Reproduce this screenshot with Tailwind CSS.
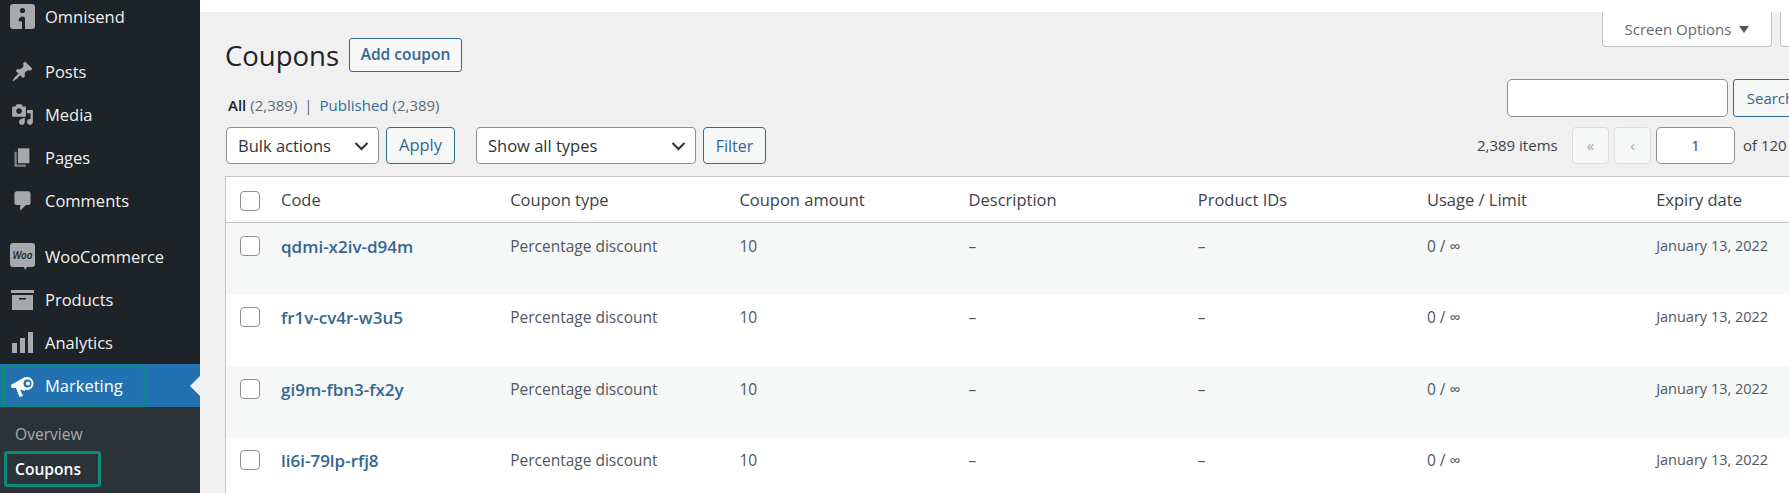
<!DOCTYPE html>
<html lang="en">
<head>
    <meta charset="UTF-8">
    <title>Coupons</title>
    <script src="https://cdn.jsdelivr.net/npm/@tailwindcss/browser@4"></script>
</head>
<body class="bg-[#f0f0f1] font-['Open_Sans',sans-serif] text-[#3c434a] overflow-hidden">
<div class="flex w-[1789px] h-[493px] overflow-hidden">

    <!-- Sidebar -->
    <aside class="w-[200px] shrink-0 bg-[#1d2327] text-[#f0f0f1] text-[16.500px] flex flex-col">
        <div class="flex items-center h-[43px] -mt-[5px] mb-[12px]">
            <svg class="ml-[10px] w-[25px] h-[25px]" viewBox="0 0 25 25"><rect width="25" height="25" rx="3" fill="#a7aaad"/><circle cx="12.500" cy="6.500" r="2.600" fill="#1d2327"/><path d="M8.500 17c0-3 2-4.500 4-4.500 1.800 0 2.500 1 2.500 2.500v10h-3v-7.500c-1 0-2.500 0-3.500-.5z" fill="#1d2327"/></svg>
            <span class="ml-[10px] mt-[2px]">Omnisend</span>
        </div>
        <div class="flex items-center h-[43px]">
            <svg class="ml-[11px] w-[23px] h-[23px]" viewBox="0 0 20 20" fill="#a7aaad"><path d="M10.440 3.020l1.820-1.820 6.360 6.350-1.830 1.820c-1.050-.68-2.480-.57-3.410.36l-.75.75c-.92.93-1.040 2.350-.35 3.410l-1.830 1.820-2.410-2.410-2.800 2.790c-.42.42-3.380 2.710-3.800 2.290s1.860-3.390 2.280-3.810l2.790-2.790L4.100 9.360l1.830-1.820c1.050.69 2.480.57 3.400-.36l.75-.75c.93-.92 1.050-2.350.36-3.410z"/></svg>
            <span class="ml-[11px] mt-[2px]">Posts</span>
        </div>
        <div class="flex items-center h-[43px]">
            <svg class="ml-[11px] w-[23px] h-[23px]" viewBox="0 0 20 20" fill="#a7aaad"><path d="M13 11V4c0-.55-.45-1-1-1h-1.670L9 1H5L3.670 3H2c-.55 0-1 .45-1 1v7c0 .55.45 1 1 1h10c.55 0 1-.45 1-1zM7 4.500c1.380 0 2.500 1.120 2.500 2.500S8.380 9.500 7 9.500 4.500 8.380 4.500 7 5.620 4.500 7 4.500zM14 6h5v10.500c0 1.380-1.120 2.500-2.500 2.500S14 17.880 14 16.500s1.120-2.500 2.500-2.500c.17 0 .34.02.5.05V9h-3V6zm-4 8.050V13h2v3.500c0 1.380-1.120 2.500-2.500 2.500S7 17.880 7 16.500 8.120 14 9.500 14c.17 0 .34.02.5.05z"/></svg>
            <span class="ml-[11px] mt-[2px]">Media</span>
        </div>
        <div class="flex items-center h-[43px]">
            <svg class="ml-[11px] w-[23px] h-[23px]" viewBox="0 0 20 20"><path fill="#a7aaad" d="M6 15V2h10v13H6z"/><path fill="#7d8287" d="M5 16h8v2H3V5h2v11z"/></svg>
            <span class="ml-[11px] mt-[2px]">Pages</span>
        </div>
        <div class="flex items-center h-[43px] mb-[13px]">
            <svg class="ml-[11px] w-[23px] h-[23px]" viewBox="0 0 20 20" fill="#a7aaad"><path d="M5 2h10c1.100 0 2 .9 2 2v8c0 1.100-.9 2-2 2h-2l-5 5v-5H5c-1.100 0-2-.9-2-2V4c0-1.100.9-2 2-2z"/></svg>
            <span class="ml-[11px] mt-[2px]">Comments</span>
        </div>
        <div class="flex items-center h-[43px]">
            <svg class="ml-[10px] w-[25px] h-[27px]" viewBox="0 0 25 27"><path d="M3 0h19c2 0 3 1 3 3v18c0 2-1 3-3 3h-5l-2 3-1-3H3c-2 0-3-1-3-3V3c0-2 1-3 3-3z" fill="#a7aaad"/><text x="12.500" y="15.500" text-anchor="middle" font-size="10" font-weight="600" font-style="italic" fill="#1d2327">Woo</text></svg>
            <span class="ml-[10px] mt-[2px]">WooCommerce</span>
        </div>
        <div class="flex items-center h-[43px]">
            <svg class="ml-[11px] w-[23px] h-[20px]" viewBox="0 0 23 20" fill="#a7aaad"><path d="M0 0h23v3H0z"/><path fill-rule="evenodd" d="M1 5h21v15H1zM8 8v1.500h7V8z"/></svg>
            <span class="ml-[11px] mt-[2px]">Products</span>
        </div>
        <div class="flex items-center h-[43px]">
            <svg class="ml-[12px] w-[21px] h-[21px]" viewBox="0 0 21 21" fill="#a7aaad"><rect y="11" width="5" height="10"/><rect x="8" y="6" width="5" height="15"/><rect x="16" width="5" height="21"/></svg>
            <span class="ml-[12px] mt-[2px]">Analytics</span>
        </div>
        <div class="relative flex items-center h-[43px] bg-[#2271b1] text-white">
            <svg class="ml-[11px] w-[23px] h-[23px]" viewBox="0 0 23 23" fill="#fff"><path d="M0 12c0-1 .5-1.500 1.500-2L14 3v14l-5-1.500 3 6.500-3.500 1-3.500-9H2c-1 0-2-.5-2-2z"/><circle cx="16" cy="9.500" r="6.500"/><circle cx="16.500" cy="9.500" r="4" fill="#2271b1"/><circle cx="17" cy="9.500" r="2"/></svg>
            <span class="ml-[11px] mt-[2px]">Marketing</span>
            <div class="absolute right-0 top-[12px] w-0 h-0 border-y-[10px] border-y-transparent border-r-[10px] border-r-[#f0f0f1]"></div>
            <div class="absolute left-[2px] top-[1px] w-[144px] h-[44px] border-[3px] border-[#0e8a7a] rounded-[3px]"></div>
        </div>
        <div class="flex-1 bg-[#2c3338] text-[15.600px] pt-[16px] pl-[15px] relative">
            <div class="text-[#a7aaad] h-[22px] leading-[22px]">Overview</div>
            <div class="text-white font-semibold h-[22px] leading-[22px] mt-[13px]">Coupons</div>
            <div class="absolute left-[4px] top-[44px] w-[97px] h-[36px] border-[3px] border-[#0e8a7a] rounded-[3px]"></div>
        </div>
    </aside>

    <!-- Main -->
    <main class="flex-1 min-w-0 overflow-hidden">
        <div class="h-[12px] bg-white"></div>
        <div class="w-[1700px] ml-[25px] text-[16.500px]">

            <!-- heading row -->
            <div class="relative flex items-center h-[34px] mt-[26px]">
                <h1 class="text-[27.500px] text-[#1d2327] w-[124px] shrink-0 pt-[2px] leading-none">Coupons</h1>
                <button class="w-[113px] h-[34px] shrink-0 border border-[#2f6d98] rounded-[3px] bg-[#f6f7f7] text-[#34678f] font-semibold text-[15.500px]">Add coupon</button>
                <div class="absolute left-[1377px] -top-[26px] w-[170px] h-[35px] bg-white border border-t-0 border-[#c3c4c7] rounded-b-[4px] flex items-center justify-center gap-[8px] text-[15px] text-[#646970]">Screen Options <span class="w-0 h-0 border-x-[5px] border-x-transparent border-t-[7px] border-t-[#50575e]"></span></div>
                <div class="absolute left-[1555px] -top-[26px] w-[100px] h-[35px] bg-white border border-t-0 border-[#c3c4c7] rounded-b-[4px]"></div>
            </div>

            <!-- All / Published + search -->
            <div class="relative flex items-center h-[22px] mt-[22px] pl-[3px] text-[15px]">
                <span class="text-[#1d2327] font-semibold">All</span>
                <span class="ml-[4px] text-[#646970]">(2,389)</span>
                <span class="mx-[7px] text-[#646970]">|</span>
                <span class="text-[#2f6d98]">Published</span>
                <span class="ml-[4px] text-[#646970]">(2,389)</span>
                <div class="absolute left-[1282px] -top-[15px] w-[221px] h-[38px] bg-white border border-[#8c8f94] rounded-[5px]"></div>
                <button class="absolute left-[1508px] -top-[15px] w-[75px] h-[38px] bg-[#f6f7f7] border border-[#2f6d98] rounded-[3px] text-[#34678f] text-[15px]">Search</button>
            </div>

            <!-- filters + pagination -->
            <div class="flex items-center h-[37px] mt-[11px]">
                <div class="w-[153px] h-[37px] shrink-0 ml-[1px] bg-white border border-[#8c8f94] rounded-[4px] flex items-center justify-between pt-[1px] pl-[11px] pr-[9px] text-[#2c3338]">Bulk actions
                    <svg class="w-[15px] h-[9px]" viewBox="0 0 14 9" fill="none" stroke="#2c3338" stroke-width="2"><path d="M1 1l6 6 6-6"/></svg>
                </div>
                <button class="ml-[7px] w-[69px] h-[37px] shrink-0 bg-[#f6f7f7] border border-[#2f6d98] rounded-[4px] text-[#34678f]">Apply</button>
                <div class="ml-[21px] w-[220px] h-[37px] shrink-0 bg-white border border-[#8c8f94] rounded-[4px] flex items-center justify-between pt-[1px] pl-[11px] pr-[9px] text-[#2c3338]">Show all types
                    <svg class="w-[15px] h-[9px]" viewBox="0 0 14 9" fill="none" stroke="#2c3338" stroke-width="2"><path d="M1 1l6 6 6-6"/></svg>
                </div>
                <button class="ml-[7px] w-[63px] h-[37px] shrink-0 bg-[#f6f7f7] border border-[#2f6d98] rounded-[4px] text-[#34678f] text-[16px]">Filter</button>
                <span class="ml-[711px] w-[95px] shrink-0 text-[15px]">2,389 items</span>
                <div class="w-[37px] h-[37px] shrink-0 bg-[#f6f7f7] border border-[#dcdcde] rounded-[4px] flex items-center justify-center text-[15px] text-[#a7aaad]">«</div>
                <div class="ml-[5px] w-[37px] h-[37px] shrink-0 bg-[#f6f7f7] border border-[#dcdcde] rounded-[4px] flex items-center justify-center text-[15px] text-[#a7aaad]">‹</div>
                <div class="ml-[5px] w-[79px] h-[37px] shrink-0 bg-white border border-[#8c8f94] rounded-[5px] flex items-center justify-center text-[15px]">1</div>
                <span class="ml-[8px] shrink-0 text-[15px]">of 120</span>
            </div>

            <!-- table -->
            <div class="mt-[12px] -mr-[1px] bg-white border-t border-l border-[#c3c4c7] text-[15.500px] text-[#50575e]">
                <div class="grid grid-cols-[55px_repeat(7,229.2px)] items-center h-[46px] pt-[2px] border-b border-[#c3c4c7] text-[16.500px] text-[#3c434a]">
                    <div class="pl-[14px]"><div class="w-[20px] h-[20px] bg-white border border-[#8c8f94] rounded-[4px]"></div></div>
                    <div>Code</div><div>Coupon type</div><div>Coupon amount</div><div>Description</div><div>Product IDs</div><div>Usage / Limit</div><div>Expiry date</div>
                </div>
                <div class="grid grid-cols-[55px_repeat(7,229.2px)] h-[71px] bg-[#f6f7f7] pt-[12px]">
                    <div class="pl-[14px] pt-[1px]"><div class="w-[20px] h-[20px] bg-white border border-[#8c8f94] rounded-[4px]"></div></div>
                    <div class="font-semibold text-[#34678f] text-[17px] -mt-[1px]">qdmi-x2iv-d94m</div><div>Percentage discount</div><div>10</div><div>–</div><div>–</div><div>0 / ∞</div><div class="text-[14.500px]">January 13, 2022</div>
                </div>
                <div class="grid grid-cols-[55px_repeat(7,229.2px)] h-[72px] bg-white pt-[12px]">
                    <div class="pl-[14px] pt-[1px]"><div class="w-[20px] h-[20px] bg-white border border-[#8c8f94] rounded-[4px]"></div></div>
                    <div class="font-semibold text-[#34678f] text-[17px] -mt-[1px]">fr1v-cv4r-w3u5</div><div>Percentage discount</div><div>10</div><div>–</div><div>–</div><div>0 / ∞</div><div class="text-[14.500px]">January 13, 2022</div>
                </div>
                <div class="grid grid-cols-[55px_repeat(7,229.2px)] h-[71px] bg-[#f6f7f7] pt-[12px]">
                    <div class="pl-[14px] pt-[1px]"><div class="w-[20px] h-[20px] bg-white border border-[#8c8f94] rounded-[4px]"></div></div>
                    <div class="font-semibold text-[#34678f] text-[17px] -mt-[1px]">gi9m-fbn3-fx2y</div><div>Percentage discount</div><div>10</div><div>–</div><div>–</div><div>0 / ∞</div><div class="text-[14.500px]">January 13, 2022</div>
                </div>
                <div class="grid grid-cols-[55px_repeat(7,229.2px)] h-[72px] bg-white pt-[12px]">
                    <div class="pl-[14px] pt-[1px]"><div class="w-[20px] h-[20px] bg-white border border-[#8c8f94] rounded-[4px]"></div></div>
                    <div class="font-semibold text-[#34678f] text-[17px] -mt-[1px]">li6i-79lp-rfj8</div><div>Percentage discount</div><div>10</div><div>–</div><div>–</div><div>0 / ∞</div><div class="text-[14.500px]">January 13, 2022</div>
                </div>
            </div>
        </div>
    </main>
</div>
</body>
</html>
